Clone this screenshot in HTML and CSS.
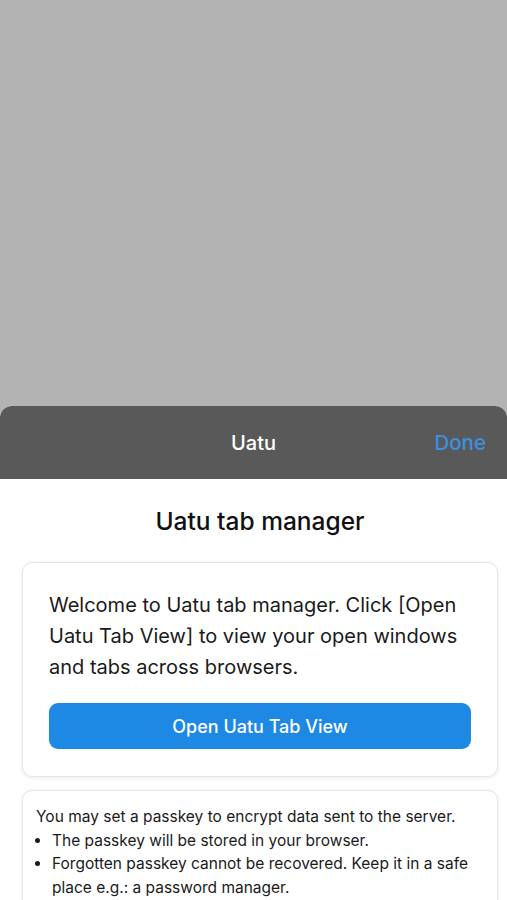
FILE: index.html
```html
<!DOCTYPE html>
<html>
<head>
<meta charset="utf-8">
<link rel="stylesheet" href="styles.css">
</head>
<body>
<div class="backdrop"></div>
<div class="sheet">
  <div class="sheet-header">
    <span class="sheet-title">Uatu</span>
    <span class="done">Done</span>
  </div>
  <div class="sheet-body">
    <h1 class="page-title">Uatu tab manager</h1>
    <div class="card card-welcome">
      <p class="welcome-text">Welcome to Uatu tab manager. Click [Open Uatu Tab View] to view your open windows and tabs across browsers.</p>
      <button class="open-btn">Open Uatu Tab View</button>
    </div>
    <div class="card card-passkey">
      <p class="passkey-text">You may set a passkey to encrypt data sent to the server.</p>
      <ul class="passkey-list">
        <li>The passkey will be stored in your browser.</li>
        <li>Forgotten passkey cannot be recovered. Keep it in a safe place e.g.: a password manager.</li>
      </ul>
    </div>
  </div>
</div>
</body>
</html>
```
FILE: styles.css
```css
html, body {
  margin: 0;
  padding: 0;
  height: 100%;
  overflow: hidden;
  background: #b3b3b3;
  font-family: Inter, "Noto Sans", "Liberation Sans", sans-serif;
}
.backdrop {
  height: 406px;
  background: #b3b3b3;
}
.sheet {
  border-radius: 12px 12px 0 0;
  overflow: hidden;
  background: #ffffff;
  height: 494px;
}
.sheet-header {
  height: 73px;
  background: #595959;
  display: flex;
  align-items: center;
  justify-content: center;
  position: relative;
}
.sheet-title {
  color: #ffffff;
  font-size: 20px;
  font-weight: 500;
}
.done {
  position: absolute;
  right: 21px;
  top: 24px;
  color: #3d8fe0;
  font-size: 20.5px;
  font-weight: 500;
}
.sheet-body {
  padding: 0 9px 0 22px;
}
.page-title {
  margin: 0;
  padding-top: 27px;
  height: 56px;
  box-sizing: border-box;
  text-align: center;
  font-size: 24.5px;
  font-weight: 500;
  color: #111111;
  line-height: 30px;
}
.card {
  width: 476px;
  box-sizing: border-box;
  border: 1px solid #e6e6e6;
  border-radius: 10px;
  background: #ffffff;
  box-shadow: 0 1px 4px rgba(0,0,0,0.08);
}
.card-welcome {
  margin-top: 27px;
  padding: 27px 26px 27px 26px;
}
.welcome-text {
  margin: 0;
  font-size: 20px;
  line-height: 31px;
  color: #1a1a1a;
}
.open-btn {
  display: block;
  width: 100%;
  height: 46px;
  margin-top: 20px;
  border: none;
  border-radius: 9px;
  background: #1e88e5;
  color: #ffffff;
  font-family: inherit;
  font-size: 18px;
  font-weight: 500;
}
.card-passkey {
  margin-top: 13px;
  padding: 14px 13px 14px 13px;
  height: 140px;
}
.passkey-text {
  margin: 0;
  font-size: 15.5px;
  line-height: 23.5px;
  color: #1a1a1a;
}
.passkey-list {
  margin: 0;
  padding-left: 16px;
  font-size: 15.5px;
  line-height: 23.5px;
  color: #1a1a1a;
}
```
